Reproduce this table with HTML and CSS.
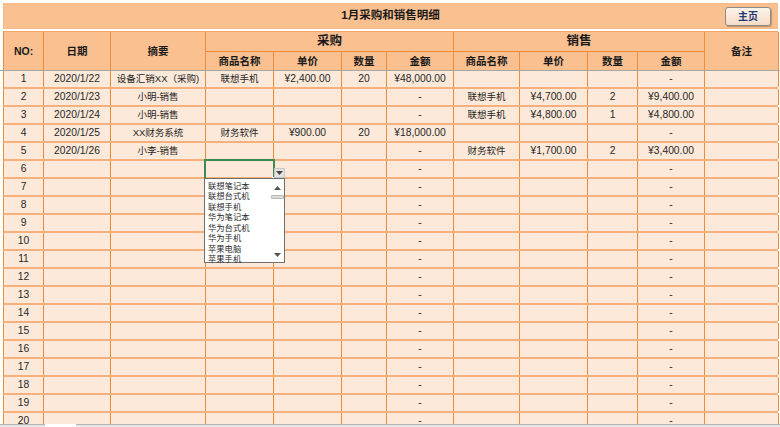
FILE: index.html
```html
<!DOCTYPE html>
<html lang="zh-CN">
<head>
<meta charset="utf-8">
<title>1月采购和销售明细</title>
<link rel="stylesheet" href="styles.css">
</head>
<body>
<div class="app">
  <div class="sheet">
    <div class="titlebar">
      <span class="spacer"></span>
      <h1 class="title">1月采购和销售明细</h1>
      <div class="btn-wrap"><button class="home-btn">主页</button></div>
    </div>
    <div class="thead">
      <div class="th tall">NO:</div>
      <div class="th tall">日期</div>
      <div class="th tall">摘要</div>
      <div class="th group g-buy">采购</div>
      <div class="th group g-sell">销售</div>
      <div class="th tall c-note">备注</div>
      <div class="th sub">商品名称</div>
      <div class="th sub">单价</div>
      <div class="th sub">数量</div>
      <div class="th sub">金额</div>
      <div class="th sub">商品名称</div>
      <div class="th sub">单价</div>
      <div class="th sub">数量</div>
      <div class="th sub">金额</div>
    </div>
    <div class="freeze"></div>
    <div class="tbody">
      <div class="row"><div class="td num">1</div><div class="td num">2020/1/22</div><div class="td cn">设备汇销XX（采购)</div><div class="td cn">联想手机</div><div class="td num">¥2,400.00</div><div class="td num">20</div><div class="td num">¥48,000.00</div><div class="td"></div><div class="td"></div><div class="td"></div><div class="td num">-</div><div class="td"></div></div>
      <div class="row"><div class="td num">2</div><div class="td num">2020/1/23</div><div class="td cn">小明-销售</div><div class="td"></div><div class="td"></div><div class="td"></div><div class="td num">-</div><div class="td cn">联想手机</div><div class="td num">¥4,700.00</div><div class="td num">2</div><div class="td num">¥9,400.00</div><div class="td"></div></div>
      <div class="row"><div class="td num">3</div><div class="td num">2020/1/24</div><div class="td cn">小明-销售</div><div class="td"></div><div class="td"></div><div class="td"></div><div class="td num">-</div><div class="td cn">联想手机</div><div class="td num">¥4,800.00</div><div class="td num">1</div><div class="td num">¥4,800.00</div><div class="td"></div></div>
      <div class="row"><div class="td num">4</div><div class="td num">2020/1/25</div><div class="td cn">XX财务系统</div><div class="td cn">财务软件</div><div class="td num">¥900.00</div><div class="td num">20</div><div class="td num">¥18,000.00</div><div class="td"></div><div class="td"></div><div class="td"></div><div class="td num">-</div><div class="td"></div></div>
      <div class="row"><div class="td num">5</div><div class="td num">2020/1/26</div><div class="td cn">小李-销售</div><div class="td"></div><div class="td"></div><div class="td"></div><div class="td num">-</div><div class="td cn">财务软件</div><div class="td num">¥1,700.00</div><div class="td num">2</div><div class="td num">¥3,400.00</div><div class="td"></div></div>
      <div class="row"><div class="td num">6</div><div class="td"></div><div class="td"></div><div class="td"></div><div class="td"></div><div class="td"></div><div class="td num">-</div><div class="td"></div><div class="td"></div><div class="td"></div><div class="td num">-</div><div class="td"></div></div>
      <div class="row"><div class="td num">7</div><div class="td"></div><div class="td"></div><div class="td"></div><div class="td"></div><div class="td"></div><div class="td num">-</div><div class="td"></div><div class="td"></div><div class="td"></div><div class="td num">-</div><div class="td"></div></div>
      <div class="row"><div class="td num">8</div><div class="td"></div><div class="td"></div><div class="td"></div><div class="td"></div><div class="td"></div><div class="td num">-</div><div class="td"></div><div class="td"></div><div class="td"></div><div class="td num">-</div><div class="td"></div></div>
      <div class="row"><div class="td num">9</div><div class="td"></div><div class="td"></div><div class="td"></div><div class="td"></div><div class="td"></div><div class="td num">-</div><div class="td"></div><div class="td"></div><div class="td"></div><div class="td num">-</div><div class="td"></div></div>
      <div class="row"><div class="td num">10</div><div class="td"></div><div class="td"></div><div class="td"></div><div class="td"></div><div class="td"></div><div class="td num">-</div><div class="td"></div><div class="td"></div><div class="td"></div><div class="td num">-</div><div class="td"></div></div>
      <div class="row"><div class="td num">11</div><div class="td"></div><div class="td"></div><div class="td"></div><div class="td"></div><div class="td"></div><div class="td num">-</div><div class="td"></div><div class="td"></div><div class="td"></div><div class="td num">-</div><div class="td"></div></div>
      <div class="row"><div class="td num">12</div><div class="td"></div><div class="td"></div><div class="td"></div><div class="td"></div><div class="td"></div><div class="td num">-</div><div class="td"></div><div class="td"></div><div class="td"></div><div class="td num">-</div><div class="td"></div></div>
      <div class="row"><div class="td num">13</div><div class="td"></div><div class="td"></div><div class="td"></div><div class="td"></div><div class="td"></div><div class="td num">-</div><div class="td"></div><div class="td"></div><div class="td"></div><div class="td num">-</div><div class="td"></div></div>
      <div class="row"><div class="td num">14</div><div class="td"></div><div class="td"></div><div class="td"></div><div class="td"></div><div class="td"></div><div class="td num">-</div><div class="td"></div><div class="td"></div><div class="td"></div><div class="td num">-</div><div class="td"></div></div>
      <div class="row"><div class="td num">15</div><div class="td"></div><div class="td"></div><div class="td"></div><div class="td"></div><div class="td"></div><div class="td num">-</div><div class="td"></div><div class="td"></div><div class="td"></div><div class="td num">-</div><div class="td"></div></div>
      <div class="row"><div class="td num">16</div><div class="td"></div><div class="td"></div><div class="td"></div><div class="td"></div><div class="td"></div><div class="td num">-</div><div class="td"></div><div class="td"></div><div class="td"></div><div class="td num">-</div><div class="td"></div></div>
      <div class="row"><div class="td num">17</div><div class="td"></div><div class="td"></div><div class="td"></div><div class="td"></div><div class="td"></div><div class="td num">-</div><div class="td"></div><div class="td"></div><div class="td"></div><div class="td num">-</div><div class="td"></div></div>
      <div class="row"><div class="td num">18</div><div class="td"></div><div class="td"></div><div class="td"></div><div class="td"></div><div class="td"></div><div class="td num">-</div><div class="td"></div><div class="td"></div><div class="td"></div><div class="td num">-</div><div class="td"></div></div>
      <div class="row"><div class="td num">19</div><div class="td"></div><div class="td"></div><div class="td"></div><div class="td"></div><div class="td"></div><div class="td num">-</div><div class="td"></div><div class="td"></div><div class="td"></div><div class="td num">-</div><div class="td"></div></div>
      <div class="row"><div class="td num">20</div><div class="td"></div><div class="td"></div><div class="td"></div><div class="td"></div><div class="td"></div><div class="td num">-</div><div class="td"></div><div class="td"></div><div class="td"></div><div class="td num">-</div><div class="td"></div></div>
    </div>

    <div class="cell-select"><span class="fill-handle"></span></div>
    <div class="dd-btn"><svg width="7" height="4" viewBox="0 0 7 4"><path d="M0 0H7L3.5 4Z" fill="#444"/></svg></div>
    <div class="dd-list">
      <ul class="dd-items">
        <li>联想笔记本</li>
        <li>联想台式机</li>
        <li>联想手机</li>
        <li>华为笔记本</li>
        <li>华为台式机</li>
        <li>华为手机</li>
        <li>苹果电脑</li>
        <li>苹果手机</li>
      </ul>
      <div class="dd-scroll">
        <svg width="7" height="4" viewBox="0 0 7 4"><path d="M0 4H7L3.5 0Z" fill="#555"/></svg>
        <span class="dd-thumb"></span>
        <span class="dd-track"></span>
        <svg width="7" height="4" viewBox="0 0 7 4"><path d="M0 0H7L3.5 4Z" fill="#555"/></svg>
      </div>
    </div>
  </div>
  <div class="tabstrip"><div class="tab"></div></div>
</div>
</body>
</html>
```

FILE: styles.css
```css
* { box-sizing: border-box; }

html, body {
  margin: 0;
  padding: 0;
  background: #ffffff;
}

body {
  font-family: "Liberation Sans", "Noto Sans CJK SC", sans-serif;
  color: #222;
}

.app {
  width: 780px;
  height: 427px;
  display: flex;
  flex-direction: column;
  overflow: hidden;
}

.sheet {
  position: relative;
  height: 424px;
  overflow: hidden;
  padding: 3px 2px 0 3px;
}

/* ---------- title bar ---------- */
.titlebar {
  height: 26px;
  margin-bottom: 2px;
  background: #fac090;
  border: 1px solid #f8b987;
  display: grid;
  grid-template-columns: 1fr auto 1fr;
  align-items: center;
}

.title {
  margin: 0;
  font-size: 11.5px;
  font-weight: bold;
  color: #1a1a1a;
  line-height: 1;
}

.btn-wrap {
  display: flex;
  justify-content: flex-end;
  padding-right: 6px;
}

.home-btn {
  width: 46px;
  height: 19px;
  padding: 0;
  border: 1px solid #8d8a88;
  border-radius: 3px;
  background: linear-gradient(#fdf3ea, #f6dcc7);
  box-shadow: 1px 1px 1px rgba(0, 0, 0, 0.25);
  font-family: "Noto Sans CJK SC", sans-serif;
  font-size: 10px;
  font-weight: bold;
  color: #1f3a78;
  line-height: 1;
}

/* ---------- header ---------- */
.thead {
  display: grid;
  grid-template-columns: 40px 67px 95px 68px 68px 45px 67px 66px 68px 50px 67px 74px;
  grid-template-rows: 20px 18px;
  background: #fac090;
  border-top: 1px solid #f3a261;
  border-left: 1px solid #ef8c3a;
}

.th {
  display: flex;
  align-items: center;
  justify-content: center;
  border-right: 1px solid #ef8c3a;
  font-weight: bold;
  font-size: 10.5px;
  color: #1a1a1a;
  line-height: 1;
}

.th.tall { grid-row: 1 / 3; }
.th.group {
  grid-row: 1;
  font-size: 12.5px;
  border-bottom: 1px solid #ef8c3a;
}
.th.g-buy { grid-column: 4 / 8; }
.th.g-sell { grid-column: 8 / 12; }
.th.c-note { grid-column: 12; }
.th.sub { grid-row: 2; }

.freeze {
  height: 1px;
  background: #a9a6a4;
  margin: 0 -2px 0 -3px;
}

/* ---------- body ---------- */
.row {
  display: grid;
  grid-template-columns: 40px 67px 95px 68px 68px 45px 67px 66px 68px 50px 67px 74px;
  height: 18px;
  background: #fde9d9;
  border-left: 1px solid #ef8c3a;
  border-bottom: 2px solid #f5b07c;
}

.td {
  display: flex;
  align-items: center;
  justify-content: center;
  border-right: 1px solid #ef8c3a;
  white-space: nowrap;
  line-height: 1;
  color: #262626;
}

.td.num { font-size: 10.3px; }
.td.cn { font-size: 9.5px; }

/* ---------- data validation dropdown (overlay) ---------- */
.cell-select {
  position: absolute;
  left: 204px;
  top: 159px;
  width: 71px;
  height: 21px;
  border: 2px solid #3e8a55;
}

.fill-handle {
  position: absolute;
  right: -4px;
  bottom: -4px;
  width: 5px;
  height: 5px;
  background: #3e8a55;
  border: 1px solid #fff;
}

.dd-btn {
  position: absolute;
  left: 274px;
  top: 168px;
  width: 11px;
  height: 10px;
  background: #e4e4e4;
  border: 1px solid #c6c6c6;
  display: flex;
  align-items: center;
  justify-content: center;
}

.dd-list {
  position: absolute;
  left: 204px;
  top: 178px;
  width: 81px;
  height: 85px;
  background: #fff;
  border: 1px solid #6f6f6f;
  display: flex;
}

.dd-items {
  list-style: none;
  margin: 0;
  padding: 1px 0 0 3px;
  flex: 1;
  font-family: "Noto Sans CJK SC", sans-serif;
  font-size: 8.3px;
  line-height: 10.45px;
  color: #2a2a2a;
}

.dd-items li { white-space: nowrap; }

.dd-scroll {
  width: 14px;
  display: flex;
  flex-direction: column;
  align-items: center;
  padding: 7px 0 5px;
}

.dd-thumb {
  display: block;
  width: 13px;
  height: 4px;
  margin-top: 5px;
  background: #dcdcdc;
  border: 1px solid #b9b9b9;
  border-radius: 1px;
}

.dd-track { flex: 1; }

/* ---------- sheet tab strip ---------- */
.tabstrip {
  height: 3px;
  background: #e6e6e6;
  border-top: 1px solid #b4b4b4;
  position: relative;
}

.tab {
  position: absolute;
  left: 45px;
  top: -1px;
  width: 31px;
  height: 3px;
  background: #ffffff;
}
```
